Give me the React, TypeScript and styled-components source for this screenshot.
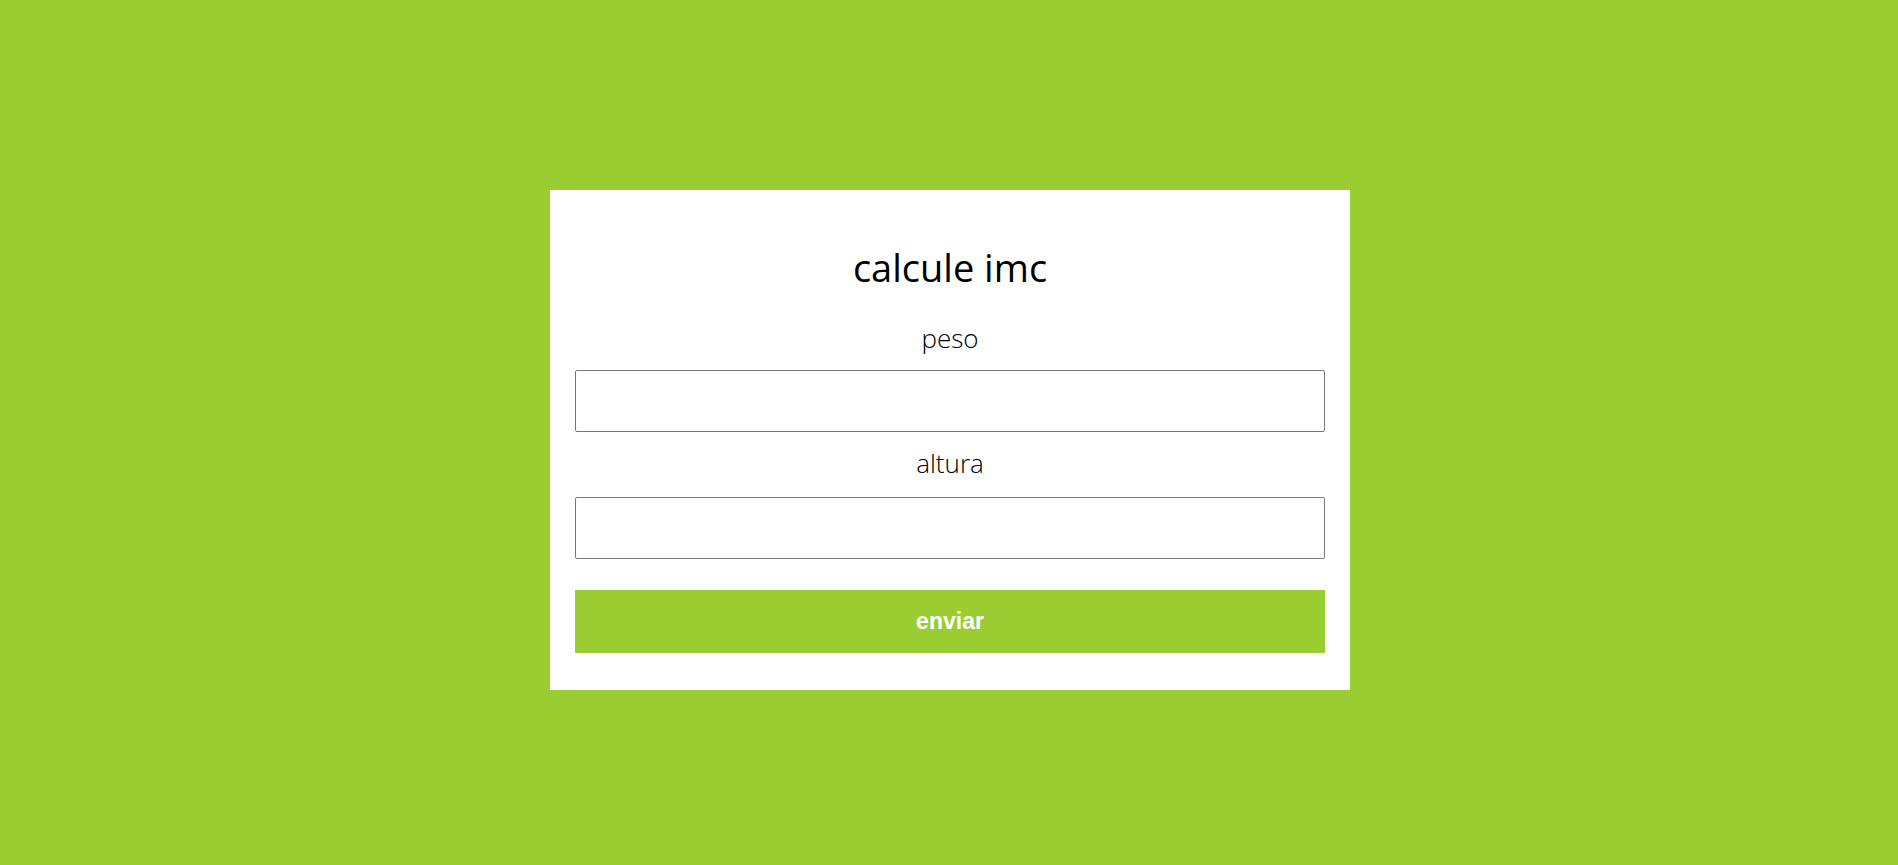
import React from "react";
import styled, { createGlobalStyle } from "styled-components";

const GlobalStyle = createGlobalStyle`
  html, body {
    margin: 0;
    padding: 0;
    background: #9acd32;
  }
  body {
    font-family: "Open Sans", "Noto Sans", sans-serif;
  }
`;

const Page = styled.main`
  min-height: 865px;
  box-sizing: border-box;
  padding: 190px 0 0 2px;
  display: flex;
  justify-content: center;
  align-items: flex-start;
`;

const Card = styled.form`
  width: 800px;
  box-sizing: border-box;
  background: #ffffff;
  padding: 58px 25px 37px;
  display: flex;
  flex-direction: column;
`;

const Title = styled.h1`
  margin: 0;
  font-family: "Open Sans", sans-serif;
  font-weight: 400;
  font-size: 38px;
  line-height: 38px;
  color: #000;
  text-align: center;
`;

const Label = styled.label<{ $gap: number }>`
  display: block;
  margin-top: ${(p) => p.$gap}px;
  font-family: "Open Sans", sans-serif;
  font-weight: 300;
  font-size: 26px;
  line-height: 26px;
  color: #000;
  text-align: center;
`;

const Input = styled.input<{ $gap: number }>`
  display: block;
  margin-top: ${(p) => p.$gap}px;
  width: 100%;
  height: 62px;
  box-sizing: border-box;
  border: 1px solid #767676;
  border-radius: 2px;
  background: #fff;
  padding: 0 10px;
  font-size: 20px;
  outline: none;
`;

const Button = styled.button`
  margin-top: 31px;
  width: 100%;
  height: 63px;
  border: none;
  background: #9acd32;
  color: #ffffff;
  font-family: "Liberation Sans", Arial, sans-serif;
  font-weight: 700;
  font-size: 23px;
  cursor: pointer;
`;

export default function App() {
  return (
    <>
      <GlobalStyle />
      <Page>
        <Card onSubmit={(e) => e.preventDefault()}>
          <Title>calcule imc</Title>
          <Label $gap={39} htmlFor="peso">peso</Label>
          <Input $gap={19} id="peso" type="text" />
          <Label $gap={18} htmlFor="altura">altura</Label>
          <Input $gap={21} id="altura" type="text" />
          <Button type="submit">enviar</Button>
        </Card>
      </Page>
    </>
  );
}
